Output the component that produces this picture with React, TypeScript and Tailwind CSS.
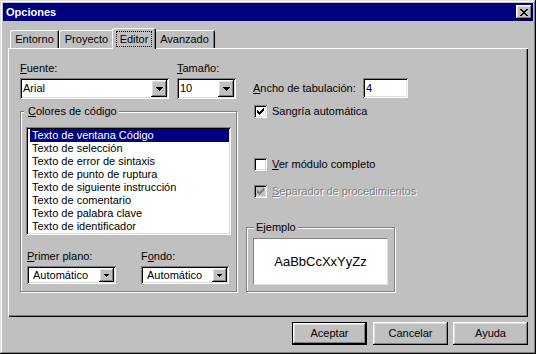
import React from 'react';

const raised =
  'shadow-[inset_-1px_-1px_#000,inset_1px_1px_#fff,inset_-2px_-2px_#808080,inset_2px_2px_#dfdfdf]';
const sunken =
  'shadow-[inset_1px_1px_#808080,inset_-1px_-1px_#fff,inset_2px_2px_#000,inset_-2px_-2px_#dfdfdf]';
const etched = 'border border-[#808080] shadow-[inset_1px_1px_#fff,1px_1px_#fff]';
const tab =
  'flex h-[18px] justify-center rounded-t-[2px] bg-[#c0c0c0] pt-[3px] shadow-[inset_1px_1px_#fff,inset_-1px_0_#000,inset_-2px_0_#808080]';

const Key = ({ children }: { children: React.ReactNode }) => (
  <span className="underline decoration-1 underline-offset-[1px]">{children}</span>
);

const Arrow = ({ small }: { small?: boolean }) =>
  small ? (
    <svg width="5" height="3" viewBox="0 0 5 3" shapeRendering="crispEdges">
      <path d="M0 0h5v1H0zM1 1h3v1H1zM2 2h1v1H2z" fill="#000" />
    </svg>
  ) : (
    <svg width="7" height="4" viewBox="0 0 7 4" shapeRendering="crispEdges">
      <path d="M0 0h7v1H0zM1 1h5v1H1zM2 2h3v1H2zM3 3h1v1H3z" fill="#000" />
    </svg>
  );

const CheckBox = ({ checked, disabled }: { checked?: boolean; disabled?: boolean }) => (
  <span
    className={`flex h-[13px] w-[13px] shrink-0 items-center justify-center ${
      disabled ? 'bg-[#c0c0c0]' : 'bg-white'
    } ${sunken}`}
  >
    {checked && (
      <svg width="7" height="7" viewBox="0 0 7 7" shapeRendering="crispEdges">
        <path
          d="M6 0h1v1H6zM5 1h2v1H5zM0 2h1v1H0zM4 2h3v1H4zM0 3h2v1H0zM3 3h3v1H3zM0 4h5v1H0zM1 5h3v1H1zM2 6h1v1H2z"
          fill={disabled ? '#808080' : '#000'}
        />
      </svg>
    )}
  </span>
);

const colores = [
  'Texto de ventana Código',
  'Texto de selección',
  'Texto de error de sintaxis',
  'Texto de punto de ruptura',
  'Texto de siguiente instrucción',
  'Texto de comentario',
  'Texto de palabra clave',
  'Texto de identificador',
];

export default function App() {
  return (
    <div
      className={`flex h-[354px] w-[536px] flex-col bg-[#c0c0c0] p-[3px] font-['Liberation_Sans',Arial,sans-serif] text-[11px] leading-[13px] text-black shadow-[inset_-1px_-1px_#000,inset_1px_1px_#dfdfdf,inset_-2px_-2px_#808080,inset_2px_2px_#fff]`}
    >
      {/* title bar */}
      <div className="flex h-[18px] items-center justify-between bg-[#000080] pl-[3px] pr-[1px]">
        <span className="font-bold text-white">Opciones</span>
        <button className={`flex h-[14px] w-[16px] items-center justify-center bg-[#c0c0c0] ${raised}`}>
          <svg width="8" height="7" viewBox="0 0 8 7" shapeRendering="crispEdges">
            <path
              d="M0 0h2v1H0zM6 0h2v1H6zM1 1h2v1H1zM5 1h2v1H5zM2 2h4v1H2zM3 3h2v1H3zM2 4h4v1H2zM1 5h2v1H1zM5 5h2v1H5zM0 6h2v1H0zM6 6h2v1H6z"
              fill="#000"
            />
          </svg>
        </button>
      </div>

      <div className="flex flex-col px-[5px]">
        {/* tabs */}
        <div className="mt-[7px] flex h-[20px] items-end pl-[2px]">
          <div className={`${tab} w-[49px]`}>Entorno</div>
          <div className={`${tab} w-[55px]`}>Proyecto</div>
          <div className="relative z-10 -mx-[2px] -mb-[1px] flex h-[21px] w-[44px] justify-center rounded-t-[2px] bg-[#c0c0c0] pt-[3px] shadow-[inset_1px_1px_#fff,inset_-1px_0_#000,inset_-2px_0_#808080]">
            <span className="flex h-[16px] items-center border border-dotted border-black px-[3px]">Editor</span>
          </div>
          <div className={`${tab} w-[61px]`}>Avanzado</div>
        </div>

        {/* panel */}
        <div className="h-[269px] w-[520px] pl-[12px] pt-[14px] shadow-[inset_1px_1px_#fff,inset_-1px_-1px_#000,inset_-2px_-2px_#808080]">
          <div className="flex gap-[9px]">
            {/* left column */}
            <div className="flex w-[217px] flex-col">
              <div className="flex gap-[8px]">
                <div className="flex flex-col gap-[3px]">
                  <span>
                    <Key>F</Key>uente:
                  </span>
                  <div className={`flex h-[21px] w-[149px] bg-white p-[2px] ${sunken}`}>
                    <span className="flex-1 pl-[1px] leading-[17px]">Arial</span>
                    <span className={`flex w-[16px] items-center justify-center bg-[#c0c0c0] ${raised}`}>
                      <Arrow />
                    </span>
                  </div>
                </div>
                <div className="flex flex-col gap-[3px]">
                  <span>
                    <Key>T</Key>amaño:
                  </span>
                  <div className={`flex h-[21px] w-[59px] bg-white p-[2px] ${sunken}`}>
                    <span className="flex-1 pl-[1px] leading-[17px]">10</span>
                    <span className={`flex w-[16px] items-center justify-center bg-[#c0c0c0] ${raised}`}>
                      <Arrow />
                    </span>
                  </div>
                </div>
              </div>

              <div className={`mt-[12px] flex flex-col px-[5px] pb-[7px] ${etched}`}>
                <span className="-ml-[2px] -mt-[7px] self-start bg-[#c0c0c0] pl-[4px] pr-[2px]">
                  <Key>C</Key>olores de código
                </span>
                <div className={`mt-[9px] flex h-[108px] flex-col bg-white py-[2px] pl-[4px] pr-[2px] ${sunken}`}>
                  {colores.map((c, i) => (
                    <div
                      key={c}
                      className={`h-[13px] pl-[2px] ${i === 0 ? 'bg-[#000080] text-white' : ''}`}
                    >
                      {c}
                    </div>
                  ))}
                </div>
                <div className="ml-[1px] mt-[15px] flex">
                  <div className="flex w-[114px] flex-col gap-[3px]">
                    <span>
                      <Key>P</Key>rimer plano:
                    </span>
                    <div className={`flex h-[18px] w-[89px] bg-white p-[2px] ${sunken}`}>
                      <span className="flex-1 pl-[4px] leading-[14px]">Automático</span>
                      <span className={`flex w-[15px] items-center justify-center bg-[#c0c0c0] ${raised}`}>
                        <Arrow small />
                      </span>
                    </div>
                  </div>
                  <div className="flex flex-col gap-[3px]">
                    <span>
                      F<Key>o</Key>ndo:
                    </span>
                    <div className={`flex h-[18px] w-[88px] bg-white p-[2px] ${sunken}`}>
                      <span className="flex-1 pl-[4px] leading-[14px]">Automático</span>
                      <span className={`flex w-[15px] items-center justify-center bg-[#c0c0c0] ${raised}`}>
                        <Arrow small />
                      </span>
                    </div>
                  </div>
                </div>
              </div>
            </div>

            {/* right column */}
            <div className="flex flex-1 flex-col pt-[16px]">
              <div className="flex items-center pl-[7px]">
                <span className="w-[110px]">
                  <Key>A</Key>ncho de tabulación:
                </span>
                <div className={`h-[20px] w-[45px] bg-white pl-[3px] leading-[20px] ${sunken}`}>4</div>
              </div>
              <div className="mt-[7px] flex items-center gap-[5px] pl-[8px]">
                <CheckBox checked />
                <span>Sangría automática</span>
              </div>
              <div className="mt-[40px] flex items-center gap-[5px] pl-[8px]">
                <CheckBox />
                <span>
                  <Key>V</Key>er módulo completo
                </span>
              </div>
              <div className="mt-[14px] flex items-center gap-[5px] pl-[8px]">
                <CheckBox checked disabled />
                <span className="text-[#808080] [text-shadow:1px_1px_0_#fff]">
                  <Key>S</Key>eparador de procedimientos
                </span>
              </div>

              <div className={`mt-auto flex w-[149px] flex-col pb-[6px] ${etched}`}>
                <span className="-mt-[7px] ml-[7px] self-start bg-[#c0c0c0] pl-[2px] pr-[2px]">Ejemplo</span>
                <div className="ml-[6px] mt-[4px] flex h-[47px] w-[135px] items-center justify-center border border-b-[#dfdfdf] border-l-[#808080] border-r-[#dfdfdf] border-t-[#808080] bg-white text-[13px]">
                  AaBbCcXxYyZz
                </div>
              </div>
            </div>
          </div>
        </div>

        {/* buttons */}
        <div className="mt-[5px] flex justify-end gap-[5px]">
          <button className={`mr-[1px] flex h-[23px] w-[75px] items-center justify-center border border-black bg-[#c0c0c0] ${raised}`}>
            Aceptar
          </button>
          <button className={`flex h-[23px] w-[75px] items-center justify-center bg-[#c0c0c0] ${raised}`}>
            Cancelar
          </button>
          <button className={`flex h-[23px] w-[75px] items-center justify-center bg-[#c0c0c0] ${raised}`}>
            Ayuda
          </button>
        </div>
      </div>
    </div>
  );
}
